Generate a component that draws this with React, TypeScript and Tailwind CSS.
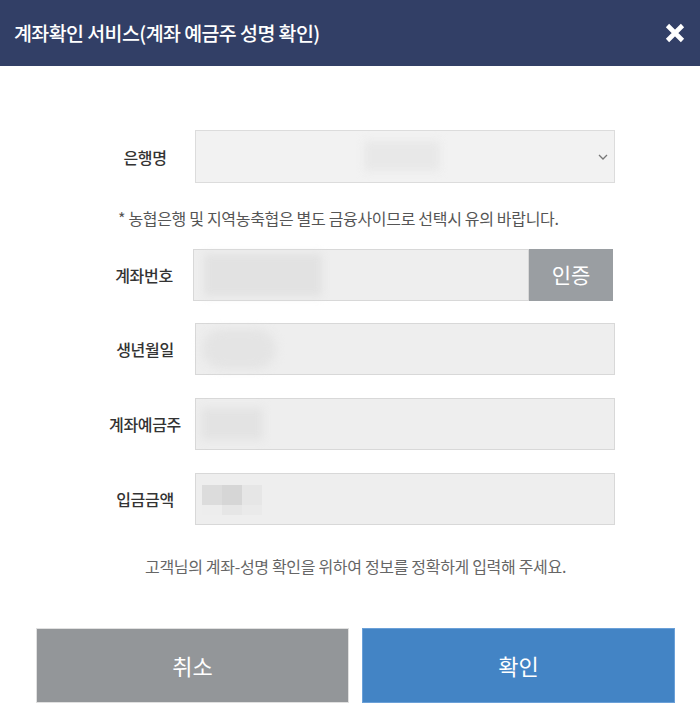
import React from "react";

const font = { fontFamily: '"Noto Sans CJK KR", "Noto Sans", sans-serif' };

function Row({ label, children, mt }: { label: string; children: React.ReactNode; mt: string }) {
  return (
    <div className={`flex items-center ${mt}`}>
      <div className="w-[100px] text-center text-[16px] font-medium text-[#333] tracking-[-0.02em]">{label}</div>
      {children}
    </div>
  );
}

export default function App() {
  return (
    <div className="w-[700px] h-[728px] bg-white flex flex-col" style={font}>
      <div className="h-[66px] shrink-0 bg-[#323f66] flex items-center justify-between pl-[14px] pr-[12px]">
        <div className="text-white text-[19.5px] font-medium tracking-[-0.03em]">계좌확인 서비스(계좌 예금주 성명 확인)</div>
        <svg width="22" height="22" viewBox="0 0 22 22" className="mr-[2px]">
          <path d="M3.5 3.5 L18.5 18.5 M18.5 3.5 L3.5 18.5" stroke="white" strokeWidth="4.6" strokeLinecap="butt" />
        </svg>
      </div>

      <div className="ml-[95px] w-[520px]">
        <Row label="은행명" mt="mt-[64px]">
          <div className="flex-1 h-[53px] bg-[#f2f2f2] border border-[#dcdcdc] flex items-center justify-between relative">
            <div className="absolute left-[168px] top-[10px] w-[76px] h-[30px] bg-[#e8e8e8] blur-[4px]" />
            <span />
            <svg width="10" height="6" viewBox="0 0 10 6" className="mr-[6px]">
              <path d="M1 1 L5 5 L9 1" stroke="#777" strokeWidth="1.3" fill="none" />
            </svg>
          </div>
        </Row>

        <div className="mt-[23px] ml-[23px] h-[24px] leading-[24px] text-[16px] text-[#555] tracking-[-0.02em] whitespace-nowrap">* 농협은행 및 지역농축협은 별도 금융사이므로 선택시 유의 바랍니다.</div>

        <div className="flex items-center mt-[19px]">
          <div className="w-[98px] text-center text-[16px] font-medium text-[#333] tracking-[-0.02em]">계좌번호</div>
          <div className="w-[336px] h-[52px] bg-[#eeeeee] border border-[#d8d8d8] flex items-center pl-[10px]">
            <div className="w-[118px] h-[42px] bg-[#e2e2e2] blur-[4px]" />
          </div>
          <div className="w-[84px] h-[52px] bg-[#9a9ea2] flex items-center justify-center text-white text-[21px] font-normal">인증</div>
        </div>

        <Row label="생년월일" mt="mt-[22px]">
          <div className="flex-1 h-[52px] bg-[#eeeeee] border border-[#d8d8d8] flex items-center pl-[6px]">
            <div className="w-[74px] h-[40px] bg-[#e4e4e4] blur-[5px] rounded-full" />
          </div>
        </Row>

        <Row label="계좌예금주" mt="mt-[23px]">
          <div className="flex-1 h-[52px] bg-[#eeeeee] border border-[#d8d8d8] flex items-center pl-[5px]">
            <div className="w-[62px] h-[32px] bg-[#e3e3e3] blur-[4px]" />
          </div>
        </Row>

        <Row label="입금금액" mt="mt-[23px]">
          <div className="flex-1 h-[52px] bg-[#eeeeee] border border-[#d8d8d8] flex flex-col items-start pl-[6px] pt-[11px]">
            <div className="flex">
              <div className="w-[20px] h-[20px] bg-[#dcdcdc]" />
              <div className="w-[20px] h-[20px] bg-[#d6d6d6]" />
              <div className="w-[20px] h-[20px] bg-[#e6e6e6]" />
            </div>
            <div className="flex">
              <div className="w-[20px] h-[10px] bg-[#ededed]" />
              <div className="w-[20px] h-[10px] bg-[#e6e6e6]" />
              <div className="w-[20px] h-[10px] bg-[#eaeaea]" />
            </div>
          </div>
        </Row>
      </div>

      <div className="mt-[29px] h-[24px] leading-[24px] text-[16px] text-[#666] tracking-[-0.02em] pl-[145px] whitespace-nowrap">고객님의 계좌-성명 확인을 위하여 정보를 정확하게 입력해 주세요.</div>

      <div className="mt-[50px] flex gap-[13px] pl-[36px]">
        <button className="shrink-0 w-[313px] h-[75px] bg-[#939699] border border-[#e0e0e0] text-white text-[22px] font-normal">취소</button>
        <button className="shrink-0 w-[313px] h-[75px] bg-[#4384c5] border border-[#6aa0d8] text-white text-[22px] font-normal">확인</button>
      </div>
    </div>
  );
}
